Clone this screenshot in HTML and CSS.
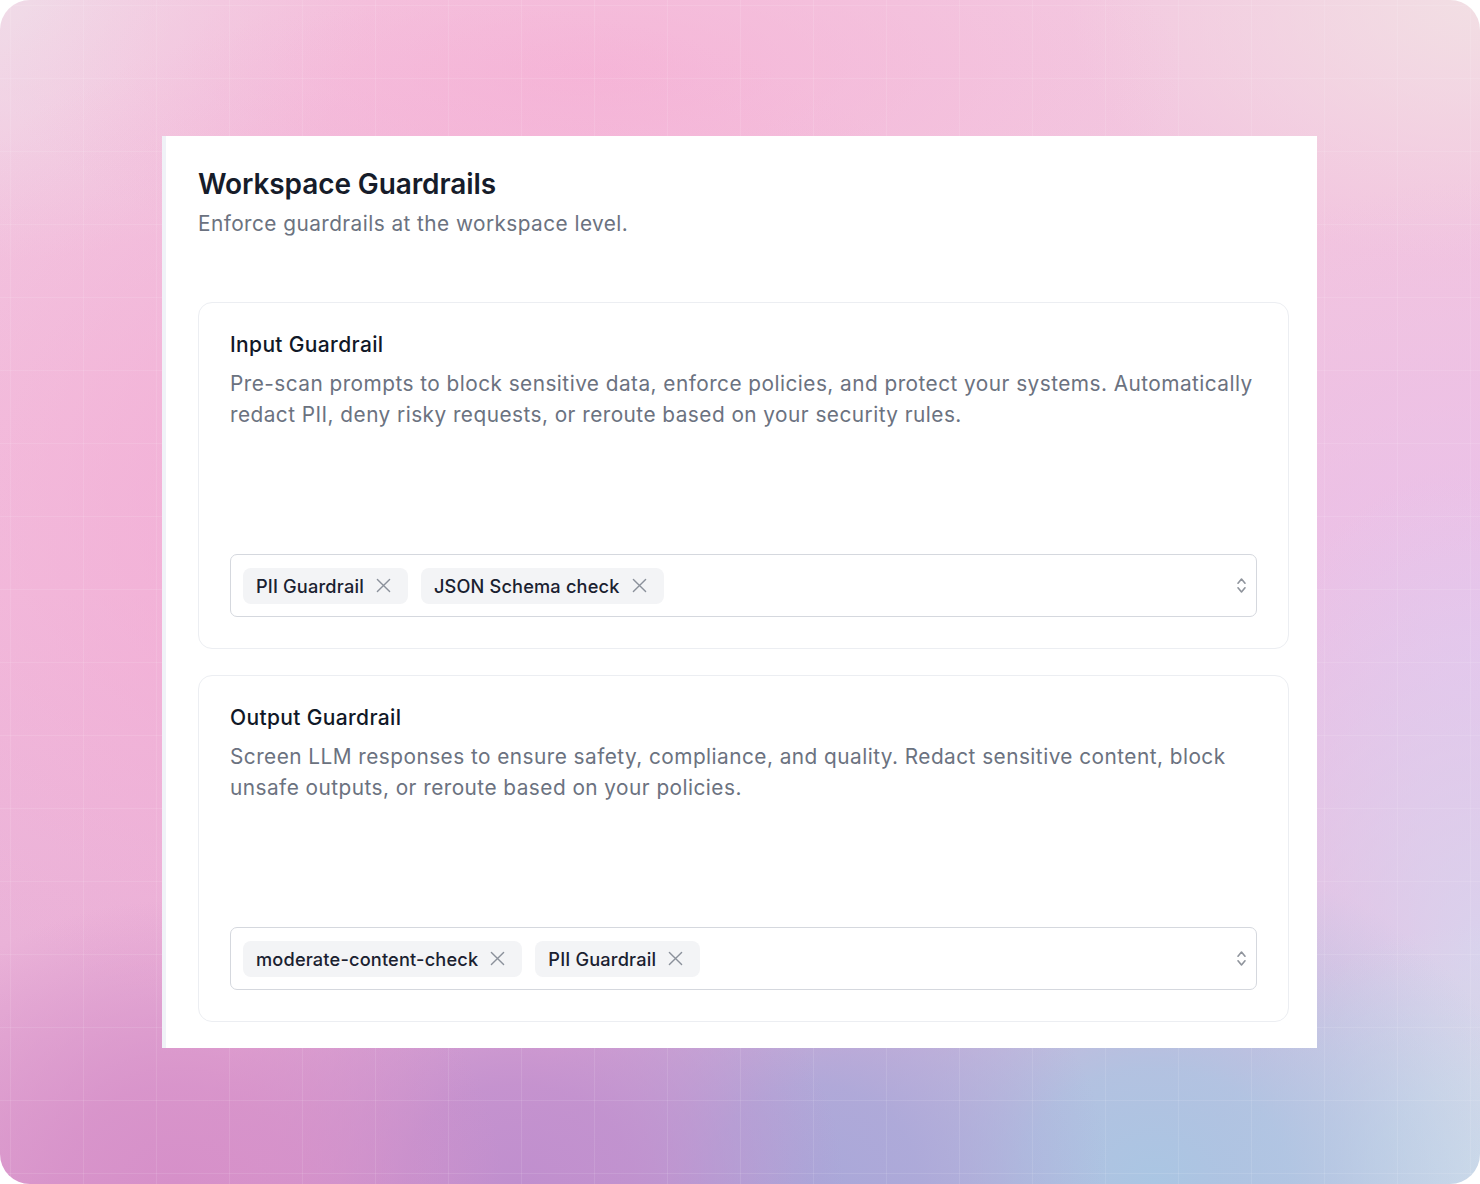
FILE: index.html
```html
<!DOCTYPE html>
<html lang="en">
<head>
<meta charset="utf-8">
<title>Workspace Guardrails</title>
<link rel="stylesheet" href="styles.css">
</head>
<body>
<div class="frame">
  <section class="panel">
    <h1 class="title">Workspace Guardrails</h1>
    <p class="subtitle">Enforce guardrails at the workspace level.</p>
    <div class="cards">
      <div class="card">
        <h2 class="card-title">Input Guardrail</h2>
        <p class="card-desc">Pre-scan prompts to block sensitive data, enforce policies, and protect your systems. Automatically redact PII, deny risky requests, or reroute based on your security rules.</p>
        <div class="select">
          <span class="tag">PII Guardrail<svg class="tag-x" viewBox="0 0 16 16"><path d="M1.5 1.5l13 13M14.5 1.5l-13 13"/></svg></span>
          <span class="tag">JSON Schema check<svg class="tag-x" viewBox="0 0 16 16"><path d="M1.5 1.5l13 13M14.5 1.5l-13 13"/></svg></span>
          <svg class="chev" viewBox="0 0 9 17"><path d="M1 6.2L4.5 2 8 6.2M1 10.8L4.5 15 8 10.8"/></svg>
        </div>
      </div>
      <div class="card">
        <h2 class="card-title">Output Guardrail</h2>
        <p class="card-desc">Screen LLM responses to ensure safety, compliance, and quality. Redact sensitive content, block unsafe outputs, or reroute based on your policies.</p>
        <div class="select">
          <span class="tag">moderate-content-check<svg class="tag-x" viewBox="0 0 16 16"><path d="M1.5 1.5l13 13M14.5 1.5l-13 13"/></svg></span>
          <span class="tag">PII Guardrail<svg class="tag-x" viewBox="0 0 16 16"><path d="M1.5 1.5l13 13M14.5 1.5l-13 13"/></svg></span>
          <svg class="chev" viewBox="0 0 9 17"><path d="M1 6.2L4.5 2 8 6.2M1 10.8L4.5 15 8 10.8"/></svg>
        </div>
      </div>
    </div>
  </section>
</div>
</body>
</html>
```
FILE: styles.css
```css
* { box-sizing: border-box; }
html, body { margin: 0; padding: 0; background: #ffffff; }
body {
  font-family: Inter, "Noto Sans", "Liberation Sans", sans-serif;
  width: 1480px;
  height: 1184px;
  overflow: hidden;
}
.frame {
  width: 1480px;
  height: 1184px;
  border-radius: 30px;
  overflow: hidden;
  padding: 136px 0 0 162px;
  background:
    linear-gradient(to right, rgba(255,255,255,0.1) 1px, transparent 1px) 10px 5px / 73px 73px,
    linear-gradient(to bottom, rgba(255,255,255,0.1) 1px, transparent 1px) 10px 5px / 73px 73px,
    radial-gradient(ellipse 22% 24% at 12% 100%, #d690c9 0%, rgba(214,144,201,0.8) 35%, rgba(214,144,201,0) 100%),
    radial-gradient(ellipse 22% 24% at 35% 100%, #c08fce 0%, rgba(192,143,206,0.85) 35%, rgba(192,143,206,0) 100%),
    radial-gradient(ellipse 20% 24% at 55% 100%, #a9a8d9 0%, rgba(169,168,217,0.85) 35%, rgba(169,168,217,0) 100%),
    radial-gradient(ellipse 26% 28% at 78% 100%, #aac6e3 0%, rgba(170,198,227,0.85) 35%, rgba(170,198,227,0) 100%),
    radial-gradient(ellipse 18% 22% at 100% 100%, #d2deeb 0%, rgba(210,222,235,0.8) 40%, rgba(210,222,235,0) 100%),
    radial-gradient(ellipse 22% 40% at 100% 80%, rgba(216,212,238,0.9), rgba(216,212,238,0) 100%),
    radial-gradient(ellipse 45% 45% at 30% 45%, rgba(244,166,210,0.85), rgba(244,166,210,0) 100%),
    radial-gradient(ellipse 40% 18% at 40% 6%, rgba(246,178,214,0.8), rgba(246,178,214,0) 100%),
    radial-gradient(ellipse 30% 40% at 100% 55%, rgba(232,194,236,0.95), rgba(232,194,236,0) 100%),
    radial-gradient(ellipse 25% 22% at 0% 0%, rgba(240,220,232,0.95), rgba(240,220,232,0) 100%),
    radial-gradient(ellipse 28% 22% at 100% 0%, rgba(242,224,228,0.95), rgba(242,224,228,0) 100%),
    linear-gradient(180deg, #f3c8e0 0%, #f1bedd 50%, #eab2d8 80%, #dfa2d0 100%);
}
.panel {
  width: 1155px;
  height: 912px;
  background: #ffffff;
  border-left: 4px solid #f0f2f7;
  padding: 30px 28px 0 32px;
}
.title {
  margin: 0;
  font-size: 28px;
  line-height: 36px;
  font-weight: 600;
  color: #161c2a;
  letter-spacing: -0.1px;
}
.subtitle {
  margin: 8px 0 0;
  font-size: 20.8px;
  line-height: 28px;
  letter-spacing: 0.44px;
  color: #6b7280;
}
.cards {
  margin-top: 64px;
  display: flex;
  flex-direction: column;
  gap: 26px;
}
.card {
  height: 347px;
  border: 1px solid #eceef2;
  border-radius: 14px;
  padding: 28px 31px 31px 31px;
  display: flex;
  flex-direction: column;
}
.card-title {
  margin: 0;
  font-size: 21px;
  line-height: 28px;
  font-weight: 500;
  letter-spacing: 0.35px;
  color: #111827;
}
.card-desc {
  margin: 9px 0 0;
  font-size: 20.8px;
  line-height: 31px;
  letter-spacing: 0.46px;
  color: #6b7280;
}
.select {
  margin-top: auto;
  height: 63px;
  border: 1px solid #d5d8de;
  border-radius: 7px;
  display: flex;
  align-items: center;
  gap: 13px;
  padding: 0 10px 0 12px;
}
.tag {
  height: 36px;
  display: inline-flex;
  align-items: center;
  background: #f3f4f6;
  border-radius: 8px;
  padding: 0 17px 0 13px;
  font-size: 18.2px;
  font-weight: 500;
  letter-spacing: 0.17px;
  color: #1a2130;
}
.tag-x {
  width: 15px;
  height: 15px;
  margin-left: 12px;
  fill: none;
  stroke: #8b919b;
  stroke-width: 1.5;
  stroke-linecap: round;
}
.chev {
  margin-left: auto;
  width: 9px;
  height: 17px;
  fill: none;
  stroke: #8f949c;
  stroke-width: 1.6;
  stroke-linecap: round;
  stroke-linejoin: round;
}
```
